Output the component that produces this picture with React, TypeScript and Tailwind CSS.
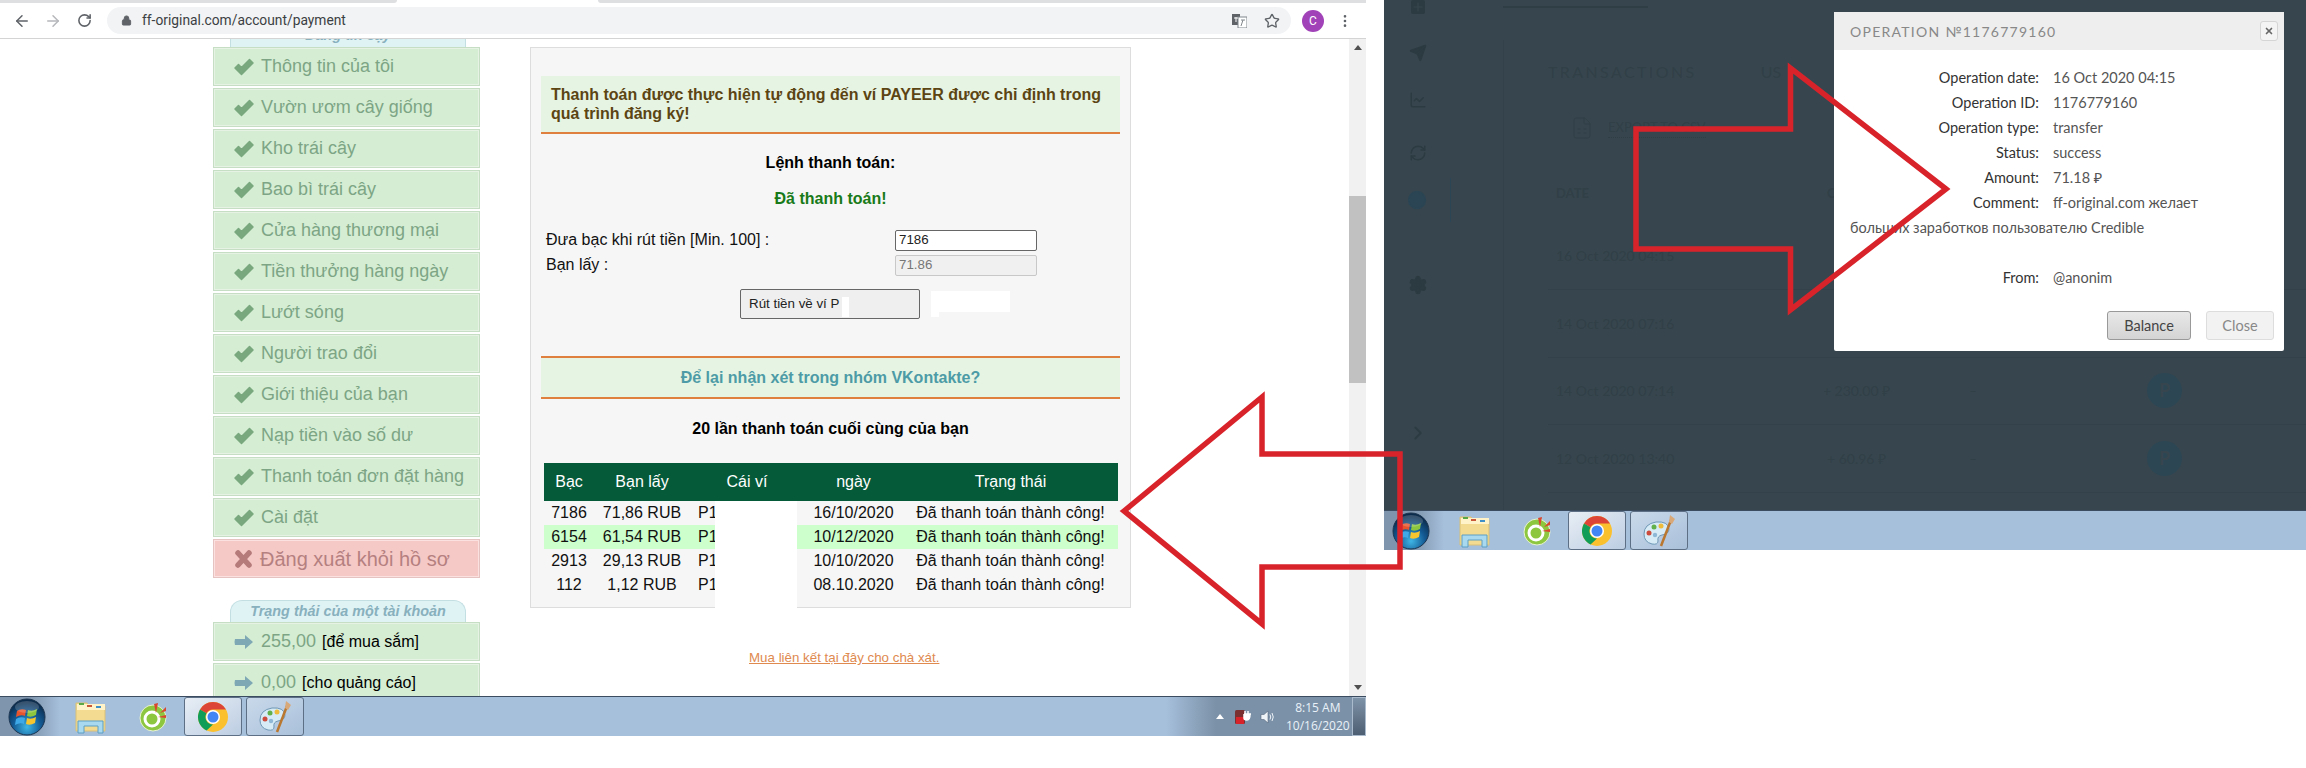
import type { ReactNode } from "react";
import { ArrowLeft, ArrowRight, RotateCw, Star, Lock, X, MoreVertical, ChevronRight, FileSpreadsheet, Send, LineChart, RefreshCw, Clock, Settings, Plus } from "lucide-react";

const menu = [
  "Thông tin của tôi",
  "Vườn ươm cây giống",
  "Kho trái cây",
  "Bao bì trái cây",
  "Cửa hàng thương mại",
  "Tiền thưởng hàng ngày",
  "Lướt sóng",
  "Người trao đổi",
  "Giới thiệu của bạn",
  "Nạp tiền vào số dư",
  "Thanh toán đơn đặt hàng",
  "Cài đặt",
];

const payments = [
  { silver: "7186", rub: "71,86 RUB", date: "16/10/2020" },
  { silver: "6154", rub: "61,54 RUB", date: "10/12/2020" },
  { silver: "2913", rub: "29,13 RUB", date: "10/10/2020" },
  { silver: "112", rub: "1,12 RUB", date: "08.10.2020" },
];

const details = [
  { label: "Operation date:", value: "16 Oct 2020 04:15" },
  { label: "Operation ID:", value: "1176779160" },
  { label: "Operation type:", value: "transfer" },
  { label: "Status:", value: "success" },
  { label: "Amount:", value: "71.18 ₽" },
];

const darkRows = [
  { date: "16 Oct 2020 04:15", amount: "", circle: false },
  { date: "14 Oct 2020 07:16", amount: "", circle: false },
  { date: "14 Oct 2020 07:14", amount: "+ 230.00 ₽", circle: true },
  { date: "12 Oct 2020 13:40", amount: "+ 60.96 ₽", circle: true },
];

function StartOrb() {
  return (
    <svg width="38" height="38" viewBox="0 0 38 38">
      <defs>
        <radialGradient id="orb" cx="50%" cy="78%" r="70%">
          <stop offset="0%" stopColor="#3fb6e6" />
          <stop offset="55%" stopColor="#135a94" />
          <stop offset="100%" stopColor="#0b2c4d" />
        </radialGradient>
      </defs>
      <circle cx="19" cy="19" r="18" fill="url(#orb)" stroke="#1c3550" />
      <path d="M9 13 Q13 10 18 12 L17 18 Q13 16 8 19 Z" fill="#e8552d" />
      <path d="M20 12 Q24 14 29 11 L28 17 Q23 20 19 18 Z" fill="#8cc63f" />
      <path d="M8 21 Q12 18 17 20 L16 26 Q12 24 7 27 Z" fill="#3fa9e8" />
      <path d="M19 20 Q23 22 28 19 L27 25 Q22 28 18 26 Z" fill="#f7c52d" />
      <ellipse cx="19" cy="9" rx="12" ry="6" fill="#ffffff" opacity="0.18" />
    </svg>
  );
}

function FolderIcon() {
  return (
    <svg width="34" height="34" viewBox="0 0 34 34">
      <path d="M2 3 H13 L15 6 H31 V31 H2 Z" fill="#f3dc92" stroke="#d9c078" />
      <rect x="3" y="4" width="28" height="6" fill="#fff4c9" />
      <rect x="5" y="3" width="5" height="2" fill="#5aa845" />
      <rect x="13" y="5" width="5" height="2" fill="#c9573a" />
      <rect x="22" y="6" width="5" height="2" fill="#3f8fc9" />
      <path d="M4 33 V21 H29 V33 H24 V26 H10 V33 Z" fill="#a8d9ee" stroke="#5d9fc4" />
    </svg>
  );
}

function GreenAppIcon() {
  return (
    <svg width="28" height="30" viewBox="0 0 28 30">
      <circle cx="14" cy="16" r="13" fill="#8dc63f" stroke="#e8f3d2" />
      <circle cx="13" cy="17" r="7" fill="none" stroke="#ffffff" strokeWidth="3" />
      <circle cx="13" cy="17" r="3" fill="#8dc63f" />
      <path d="M15 2 L17 11 L19 1 Z" fill="#d9472f" />
      <path d="M21 11 L27 5 L27 9 Z" fill="#d9472f" />
      <path d="M19 15 L27 13 L27 16 Z" fill="#d9472f" />
    </svg>
  );
}

function ChromeIcon() {
  return (
    <svg width="30" height="30" viewBox="0 0 30 30">
      <circle cx="15" cy="15" r="15" fill="#fbc02d" />
      <path d="M15 0 A15 15 0 0 1 28 7.5 L15 7.5 A7.5 7.5 0 0 0 8.5 11.2 L2 7.5 A15 15 0 0 1 15 0 Z" fill="#db4437" />
      <path d="M2 7.5 L8.5 11.2 A7.5 7.5 0 0 0 15 22.5 L8.5 28.5 A15 15 0 0 1 2 7.5 Z" fill="#0f9d58" />
      <circle cx="15" cy="15" r="7" fill="#ffffff" />
      <circle cx="15" cy="15" r="5.5" fill="#4285f4" />
    </svg>
  );
}

function PaintIcon() {
  return (
    <svg width="34" height="34" viewBox="0 0 34 34">
      <path d="M2 20 Q2 10 14 8 Q26 7 27 15 Q27 20 20 21 Q15 22 16 27 Q16 31 10 30 Q2 28 2 20 Z" fill="#d6ebf5" stroke="#6f97b5" />
      <circle cx="7" cy="19" r="2.5" fill="#cc4b3c" />
      <circle cx="12" cy="13" r="2.5" fill="#62b04c" />
      <circle cx="19" cy="12" r="2.5" fill="#eebc3a" />
      <circle cx="13" cy="21" r="2.2" fill="#8fb7d6" />
      <path d="M29 6 L19 32" stroke="#b9772f" strokeWidth="2.5" />
      <path d="M27 8 L28 1 L33 5 L30 10 Z" fill="#d8a878" />
    </svg>
  );
}

// chunky glyphicon style marks used in the sidebar
function CheckMark() {
  return (
    <svg width="20" height="18" viewBox="0 0 20 18" fill="#7aa87e" stroke="#7aa87e" strokeWidth="1.5" strokeLinejoin="round">
      <path d="M1 10 L4.5 6.5 L7.5 9.5 L15.5 1.5 L19 5 L7.5 16.5 Z" />
    </svg>
  );
}

function CrossMark() {
  return (
    <svg width="19" height="20" viewBox="0 0 19 20" fill="none" stroke="#b57a7a" strokeWidth="5.5" strokeLinecap="round">
      <path d="M4 4 L15 16 M15 4 L4 16" />
    </svg>
  );
}

function Taskbar({ tray }: { tray?: ReactNode }) {
  return (
    <div className="flex h-[40px] w-full items-stretch border-t border-[#3c4c60] bg-[#a6bfdb]">
      <div className="flex w-[60px] items-center justify-center bg-gradient-to-r from-[#7f95ad] via-[#7f95ad] to-[#a6bfdb] pr-[6px]">
        <StartOrb />
      </div>
      <div className="flex w-[62px] items-center justify-center">
        <FolderIcon />
      </div>
      <div className="flex w-[62px] items-center justify-center">
        <GreenAppIcon />
      </div>
      <div className="flex w-[58px] items-center justify-center rounded-[3px] border border-[#5c6f85] bg-gradient-to-br from-[#e8eef5] to-[#bccde2]">
        <ChromeIcon />
      </div>
      <div className="ml-[4px] flex w-[58px] items-center justify-center rounded-[3px] border border-[#5c6f85] bg-gradient-to-br from-[#c9d9ea] to-[#a9c0da]">
        <PaintIcon />
      </div>
      {tray}
    </div>
  );
}

function Tray() {
  return (
    <div className="ml-auto flex w-[200px] items-center bg-gradient-to-r from-[#a6bfdb] to-[#7b91a8] to-[25%]">
      <div className="ml-[50px] h-0 w-0 border-x-[4px] border-b-[5px] border-x-transparent border-b-white" />
      <svg className="ml-[11px]" width="16" height="17" viewBox="0 0 16 17">
        <rect x="0" y="2" width="10" height="14" rx="1.5" fill="#7a3030" />
        <rect x="1" y="9" width="8" height="7" fill="#d8232a" />
        <path d="M9 6 H16 M10 3 V6 M13 3 V6 M9 6 V10 Q9 12 12 12 Q15 12 15 6" fill="#ffffff" stroke="#ffffff" strokeWidth="1.5" />
      </svg>
      <svg className="ml-[9px]" width="16" height="16" viewBox="0 0 16 16">
        <path d="M1 5.5 H4 L8 2 V14 L4 10.5 H1 Z" fill="#eef3f8" stroke="#55677a" strokeWidth="0.6" />
        <path d="M10 5.5 Q11.5 8 10 10.5 M12 4 Q14.5 8 12 12" fill="none" stroke="#eef3f8" />
      </svg>
      <div className="ml-[10px] flex flex-col items-center text-[12px] leading-[18px] text-[#eaf1f8] [font-family:'Open_Sans',sans-serif]">
        <span>8:15 AM</span>
        <span>10/16/2020</span>
      </div>
      <div className="ml-auto h-full w-[14px] border border-[#a9bbcd] bg-gradient-to-b from-[#7f93a8] to-[#4d5f72]" />
    </div>
  );
}

function BrowserBar() {
  return (
    <div className="flex h-[39px] shrink-0 flex-col border-b border-[#d4d4d4] bg-white">
      <div className="flex h-[3px] justify-between">
        <div className="w-[397px] rounded-br-[4px] bg-[#dedfe1]" />
        <div className="w-[768px] rounded-bl-[4px] bg-[#dedfe1]" />
      </div>
      <div className="flex flex-1 items-center pl-[13px]">
        <ArrowLeft className="h-[18px] w-[18px] text-[#5f6368]" />
        <ArrowRight className="ml-[13px] h-[18px] w-[18px] text-[#b5b7ba]" />
        <RotateCw className="ml-[15px] h-[15px] w-[15px] text-[#5f6368]" strokeWidth={2.5} />
        <div className="ml-[15px] flex h-[27px] w-[1184px] items-center rounded-full bg-[#f1f3f4] pl-[14px] pr-[11px]">
          <Lock className="h-[11px] w-[11px] fill-[#5f6368] text-[#5f6368]" />
          <span className="ml-[10px] text-[13.8px] text-[#3c4043] [font-family:Roboto,sans-serif]">
            ff-original.com/account/payment
          </span>
          <svg className="ml-auto" width="15" height="14" viewBox="0 0 15 14">
            <rect x="0" y="0" width="8" height="11" fill="#5f6368" />
            <rect x="6" y="3" width="9" height="11" fill="#ffffff" stroke="#80868b" />
            <path d="M2 4 H6 M4 3 V8" stroke="#ffffff" />
            <path d="M9 6 H13 M11 6 L9 12" stroke="#80868b" />
          </svg>
          <Star className="ml-[17px] h-[16px] w-[16px] text-[#5f6368]" />
        </div>
        <div className="ml-[11px] flex h-[22px] w-[22px] items-center justify-center rounded-full bg-[#a142b8] text-[12px] text-white [font-family:Roboto,sans-serif]">
          C
        </div>
        <MoreVertical className="ml-[13px] h-[16px] w-[16px] text-[#5f6368]" />
      </div>
    </div>
  );
}

function MenuItem({ children, danger }: { children: ReactNode; danger?: boolean }) {
  return (
    <div
      className={`mb-[2px] flex h-[39px] shrink-0 items-center border-[1px] pl-[20px] shadow-[inset_0_0_0_1px_#e6f3e4] ${
        danger
          ? "border-[#e5c3c1] bg-[#f5c9c6] shadow-[inset_0_0_0_1px_#fbe2e0]"
          : "border-[#c6dfc4] bg-[#d4edd3]"
      }`}
    >
      {children}
    </div>
  );
}

function Sidebar() {
  return (
    <div className="ml-[213px] flex w-[267px] shrink-0 flex-col">
      <div className="ml-[17px] mr-[14px] flex h-[8px] shrink-0 items-start justify-center overflow-hidden border-x border-[#c4dfe2] bg-[#dff3f5]">
        <span className="-mt-[11px] text-[14.4px] font-bold italic leading-[14px] text-[#88b0bd]">Đáng tin cậy</span>
      </div>
      {menu.map((item) => (
        <MenuItem key={item}>
          <CheckMark />
          <span className="ml-[7px] text-[18px] text-[#7da585]">{item}</span>
        </MenuItem>
      ))}
      <MenuItem danger>
        <CrossMark />
        <span className="ml-[7px] text-[20px] text-[#b58080]">Đăng xuất khỏi hồ sơ</span>
      </MenuItem>
      <div className="ml-[17px] mr-[14px] mt-[20px] flex h-[22px] shrink-0 items-center justify-center rounded-t-[12px] border-x border-t border-[#c4dfe2] bg-[#dff3f5] text-[14.4px] font-bold italic text-[#88b0bd]">
        Trạng thái của một tài khoản
      </div>
      {[
        { value: "255,00", note: "[để mua sắm]" },
        { value: "0,00", note: "[cho quảng cáo]" },
      ].map((row) => (
        <MenuItem key={row.value}>
          <svg width="20" height="16" viewBox="0 0 20 16">
            <path d="M1 5 H11 V1 L19 8 L11 15 V11 H1 Q0 8 1 5 Z" fill="#7fa8b5" />
          </svg>
          <span className="ml-[7px] text-[18px] text-[#7da585]">{row.value}</span>
          <span className="ml-[6px] text-[16px] text-black">{row.note}</span>
        </MenuItem>
      ))}
    </div>
  );
}

function PaymentPanel() {
  return (
    <div className="relative h-[561px] border border-[#dddddd] bg-[#f6f6f6] px-[10px]">
      <div className="mt-[28px] border-b-2 border-[#e0803f] bg-[#e6f5e3] px-[10px] py-[9px] text-[16px] font-bold leading-[19px] text-[#5c4413]">
        Thanh toán được thực hiện tự động đến ví PAYEER được chỉ định trong quá trình đăng ký!
      </div>
      <p className="mt-[19px] text-center text-[16px] font-bold leading-[20px] text-black">Lệnh thanh toán:</p>
      <p className="mt-[16px] text-center text-[16px] font-bold leading-[20px] text-[#187a18]">Đã thanh toán!</p>
      <div className="mt-[21px] flex h-[20px] items-center pl-[5px]">
        <span className="w-[349px] text-[16px] text-[#111111]">Đưa bạc khi rút tiền [Min. 100] :</span>
        <div className="flex h-[21px] w-[142px] items-center rounded-[2px] border border-[#666666] bg-white pl-[3px] text-[13.33px] text-[#222222]">
          7186
        </div>
      </div>
      <div className="mt-[5px] flex h-[20px] items-center pl-[5px]">
        <span className="w-[349px] text-[16px] text-[#111111]">Bạn lấy :</span>
        <div className="flex h-[21px] w-[142px] items-center rounded-[2px] border border-[#c8c8c8] bg-[#f0f0f0] pl-[3px] text-[13.33px] text-[#777777]">
          71.86
        </div>
      </div>
      <div className="mt-[14px] flex h-[30px] pl-[199px]">
        <div className="relative flex h-[30px] w-[180px] items-center rounded-[2px] border border-[#666666] bg-[#efefef] pl-[8px] text-[13.33px] text-[#222222]">
          Rút tiền về ví P
          <div className="absolute left-[101px] top-[7px] h-[20px] w-[7px] bg-white" />
        </div>
        <div className="ml-[11px] mt-[2px]">
          <div className="h-[21px] w-[79px] bg-white" />
          <div className="h-[5px] w-[8px] bg-white" />
        </div>
      </div>
      <div className="mt-[37px] flex h-[43px] items-center justify-center border-y-2 border-[#e0803f] bg-[#e6f5e3] text-[16px] font-bold text-[#4d9ba6]">
        Để lại nhận xét trong nhóm VKontakte?
      </div>
      <p className="mt-[20px] text-center text-[16px] font-bold leading-[20px] text-black">
        20 lần thanh toán cuối cùng của bạn
      </p>
      <table className="ml-[3px] mt-[24px] w-[574px] table-fixed text-center text-[16px] text-[#111111]">
        <colgroup>
          <col className="w-[50px]" />
          <col className="w-[96px]" />
          <col className="w-[114px]" />
          <col className="w-[99px]" />
          <col className="w-[215px]" />
        </colgroup>
        <thead>
          <tr className="h-[38px] bg-[#055a3a] text-white">
            <th className="font-normal">Bạc</th>
            <th className="font-normal">Bạn lấy</th>
            <th className="font-normal">Cái ví</th>
            <th className="font-normal">ngày</th>
            <th className="font-normal">Trạng thái</th>
          </tr>
        </thead>
        <tbody>
          {payments.map((row, index) => (
            <tr key={row.silver} className={`h-[24px] ${index == 1 ? "bg-[#ccffcc]" : ""}`}>
              <td>{row.silver}</td>
              <td>{row.rub}</td>
              <td className="pl-[8px] text-left">P1</td>
              <td>{row.date}</td>
              <td>Đã thanh toán thành công!</td>
            </tr>
          ))}
        </tbody>
      </table>
      {/* wallet numbers are painted out in the picture */}
      <div className="absolute left-[184px] top-[453px] h-[108px] w-[82px] bg-white" />
    </div>
  );
}

function Scrollbar() {
  return (
    <div className="ml-auto flex w-[17px] shrink-0 flex-col items-center bg-[#f1f1f1]">
      <div className="mt-[6px] h-0 w-0 border-x-[4px] border-b-[5px] border-x-transparent border-b-[#505050]" />
      <div className="mt-[146px] h-[187px] w-full bg-[#c1c1c1]" />
      <div className="mb-[6px] mt-auto h-0 w-0 border-x-[4px] border-t-[5px] border-x-transparent border-t-[#505050]" />
    </div>
  );
}

function BrowserShot() {
  return (
    <div className="flex w-[1366px] shrink-0 flex-col">
      <div className="flex h-[696px] flex-col overflow-hidden">
        <BrowserBar />
        <div className="flex min-h-0 flex-1 overflow-hidden">
          <Sidebar />
          <div className="ml-[50px] w-[601px] shrink-0 pt-[8px]">
            <PaymentPanel />
            <a className="mt-[40px] block pl-[219px] text-[13.33px] text-[#e08a50] underline">
              Mua liên kết tại đây cho chà xát.
            </a>
          </div>
          <Scrollbar />
        </div>
      </div>
      <Taskbar tray={<Tray />} />
    </div>
  );
}

function WalletShot() {
  return (
    <div className="relative ml-[18px] flex w-[922px] shrink-0 flex-col">
      <div className="flex h-[510px] overflow-hidden bg-[#37464e] text-[#313f47]">
        <div className="w-[119px] shrink-0">
          <div className="flex w-[67px] flex-col items-center text-[#2c3a41]">
            <Plus className="h-[14px] w-[14px] rounded-[2px] bg-[#2c3a41] text-[#37464e]" />
            <Send className="mt-[30px] h-[18px] w-[18px] fill-[#2c3a41]" />
            <LineChart className="mt-[29px] h-[18px] w-[18px]" />
            <RefreshCw className="mt-[35px] h-[18px] w-[18px]" />
            <div className="mt-[16px] h-[44px] w-full border-r border-[#2b4554]">
              <Clock className="mx-auto mt-[12px] h-[20px] w-[20px] fill-[#2b4554] text-[#2b4554]" />
            </div>
            <Settings className="mt-[53px] h-[20px] w-[20px] fill-[#2c3a41]" />
            <ChevronRight className="mt-[127px] h-[22px] w-[22px]" />
          </div>
        </div>
        <div className="flex min-w-0 flex-1 flex-col">
          <div className="mt-[6px] h-[2px] w-[145px] bg-[#2f3d44]" />
          <div className="mt-[32px] flex-1 border-l border-[#33424a] pl-[44px]">
            <div className="mt-[20px] flex items-center">
              <span className="text-[16px] tracking-[0.15em] [font-family:Lato,sans-serif]">TRANSACTIONS</span>
              <span className="ml-[64px] text-[16px] [font-family:Lato,sans-serif]">US</span>
            </div>
            <div className="mt-[30px] flex items-center pl-[22px]">
              <FileSpreadsheet className="h-[28px] w-[24px]" strokeWidth={1} />
              <span className="ml-[14px] border-b border-dotted border-[#2f3d44] text-[13px] [font-family:Lato,sans-serif]">
                EXPORT TO CSV
              </span>
            </div>
            <div className="mt-[42px] flex pl-[8px] text-[13px] font-bold [font-family:Lato,sans-serif]">
              <span className="w-[271px]">DATE</span>
              <span>C</span>
            </div>
            <div className="mt-[19px] flex flex-col [font-family:Lato,sans-serif]">
              {darkRows.map((row) => (
                <div key={row.date} className="flex h-[67.5px] items-center border-b border-[#33424a] pl-[8px] text-[14px]">
                  <span className="w-[238px]">{row.date}</span>
                  <span className="w-[125px] text-center">{row.amount}</span>
                  <span className="w-[228px] pl-[50px]">{row.circle ? "–" : ""}</span>
                  {row.circle && (
                    <span className="flex h-[35px] w-[35px] items-center justify-center rounded-full bg-[#2d4654] text-[18px] font-bold text-[#37464e]">
                      P
                    </span>
                  )}
                </div>
              ))}
            </div>
          </div>
        </div>
      </div>
      <Taskbar />

      {/* modal sits over the dimmed page */}
      <div className="absolute left-[450px] top-[12px] h-[339px] w-[450px] rounded-[2px] bg-white [font-family:Lato,'Noto_Sans',sans-serif]">
        <div className="flex h-[38px] items-center justify-between bg-[#eeeeee] pl-[16px] pr-[6px]">
          <span className="text-[14px] tracking-[0.09em] text-[#888888]">OPERATION №1176779160</span>
          <span className="flex h-[20px] w-[18px] items-center justify-center rounded-[3px] border border-[#d5d5d5] bg-[#f4f4f4]">
            <X className="h-[10px] w-[10px] text-[#666666]" strokeWidth={4} />
          </span>
        </div>
        <div className="pt-[15px] text-[14.5px] leading-[25px]">
          {details.map((row) => (
            <div key={row.label} className="flex">
              <span className="w-[205px] text-right text-[#333333]">{row.label}</span>
              <span className="ml-[14px] text-[#555555]">{row.value}</span>
            </div>
          ))}
          <div className="flex">
            <span className="w-[205px] text-right text-[#333333]">Comment:</span>
            <span className="ml-[14px] text-[#555555]">ff-original.com желает</span>
          </div>
          <div className="pl-[16px] text-[#555555]">больших заработков пользователю Credible</div>
          <div className="mt-[25px] flex">
            <span className="w-[205px] text-right text-[#333333]">From:</span>
            <span className="ml-[14px] text-[#555555]">@anonim</span>
          </div>
        </div>
        <div className="mt-[21px] flex justify-end gap-[15px] pr-[10px] text-[14.5px]">
          <span className="flex h-[29px] w-[84px] items-center justify-center rounded-[3px] border border-[#999999] bg-gradient-to-b from-[#e8e8e8] to-[#d4d4d4] text-[#444444]">
            Balance
          </span>
          <span className="flex h-[29px] w-[68px] items-center justify-center rounded-[3px] border border-[#dddddd] bg-[#f2f2f2] text-[#888888]">
            Close
          </span>
        </div>
      </div>
    </div>
  );
}

function RedArrows() {
  return (
    <svg className="pointer-events-none absolute left-0 top-0" width="2306" height="768" viewBox="0 0 2306 768" fill="none" stroke="#d9232b" strokeWidth="5.5" strokeLinejoin="miter">
      <path d="M1124 511 L1262 397 V454 H1400 V567 H1262 V624 Z" />
      <path d="M1946 189 L1790.5 68 V129 H1636 V249 H1790.5 V310 Z" />
    </svg>
  );
}

export default function App() {
  return (
    <div className="relative flex h-[768px] w-[2306px] items-start overflow-hidden bg-white [font-family:'Liberation_Sans',Arial,sans-serif]">
      <BrowserShot />
      <WalletShot />
      <RedArrows />
    </div>
  );
}
